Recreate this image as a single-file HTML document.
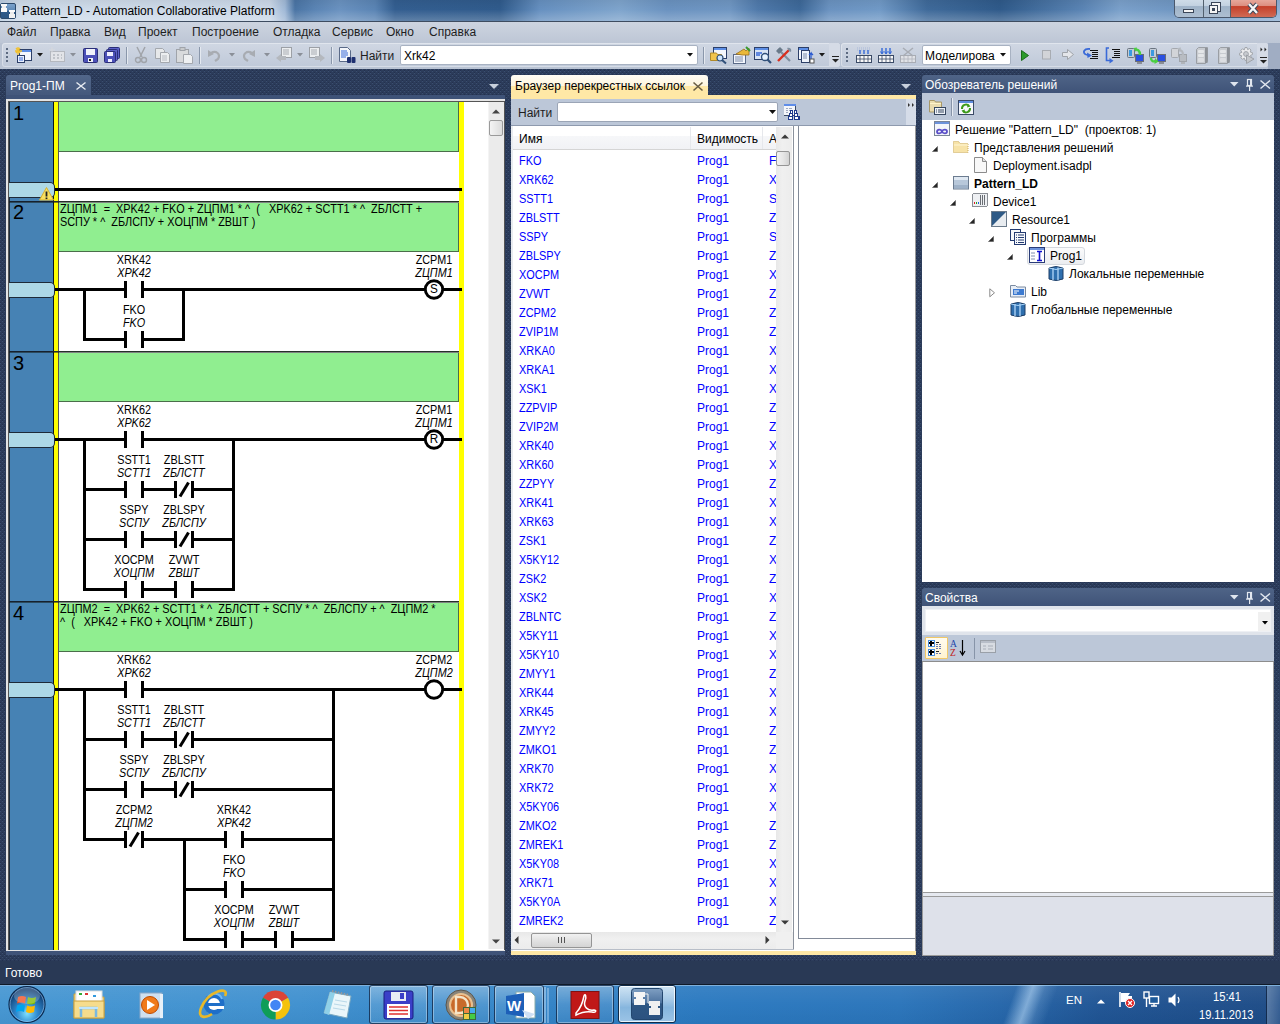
<!DOCTYPE html><html><head><meta charset="utf-8"><title>Pattern_LD</title><style>
*{margin:0;padding:0;box-sizing:border-box}
html,body{width:1280px;height:1024px;overflow:hidden;background:#293955;font-family:"Liberation Sans",sans-serif;font-size:12px;color:#000}
.a{position:absolute}
.t{position:absolute;white-space:nowrap;line-height:14px}
.dots{background-color:#2a3a57;background-image:radial-gradient(circle at 0.5px 0.5px,#3b4e70 0.7px,transparent 0.8px),radial-gradient(circle at 2.5px 2.5px,#3b4e70 0.7px,transparent 0.8px);background-size:4px 4px}
.hdr{background:linear-gradient(#4f6487,#3e5277);color:#fff}
.tb{background:#bcc7d8}
svg{position:absolute;overflow:visible}
</style></head><body>
<div class="a" style="left:0;top:0;width:1280px;height:21px;background:linear-gradient(90deg,#b9cbe0 0px,#cfdcea 20px,#cbd8e8 270px,#9fb8d6 285px,#4a74a4 295px,#5a84b4 315px,#6a92c0 340px,#5a84b4 375px,#335e90 395px,#305b8c 500px,#6690c0 540px,#7ea4cc 620px,#6a92c0 667px,#6f96c2 730px,#4f79aa 758px,#3d6898 800px,#6a92c0 829px,#7099c6 880px,#3f6a9a 927px,#2f5a8a 1000px,#5a84b4 1082px,#7aa0ca 1120px,#6f96c2 1174px,#8fb0d4 1280px)"></div>
<div class="a" style="left:0;top:0;width:1280px;height:21px;background:linear-gradient(rgba(0,0,0,0.06),rgba(255,255,255,0) 45%,rgba(255,255,255,0.22))"></div>
<div class="a" style="left:0;top:3px;width:16px;height:16px;background:linear-gradient(#7aa2cc,#5f8ab8 45%,#2f5b8a 50%,#2c5684);border:1px solid #2c4a6c;border-radius:2px"></div>
<div class="a" style="left:1px;top:4px;width:6px;height:2px;background:#fafafa"></div><div class="a" style="left:2px;top:6px;width:4px;height:2px;background:#f0f0f0"></div><div class="a" style="left:1px;top:8px;width:6px;height:4px;background:#fafafa"></div>
<div class="a" style="left:9px;top:10px;width:6px;height:2px;background:#fafafa"></div><div class="a" style="left:10px;top:12px;width:4px;height:2px;background:#eaeaea"></div><div class="a" style="left:9px;top:14px;width:6px;height:4px;background:#f0f0f0"></div>
<div class="t" style="left:22px;top:4px;font-size:12px;color:#000">Pattern_LD - Automation Collaborative Platform</div>
<div class="a" style="left:1174px;top:-2px;width:103px;height:20px;border:1px solid #4a586c;border-top:none;border-radius:0 0 5px 5px;overflow:hidden"><div class="a" style="left:0;top:0;width:28px;height:19px;background:linear-gradient(#d3dfea,#c3d2e1 40%,#9fb3c8 45%,#aebfd1)"></div><div class="a" style="left:28px;top:0;width:1px;height:19px;background:#52606e"></div><div class="a" style="left:29px;top:0;width:26px;height:19px;background:linear-gradient(#d3dfea,#c3d2e1 40%,#9fb3c8 45%,#aebfd1)"></div><div class="a" style="left:55px;top:0;width:1px;height:19px;background:#52606e"></div><div class="a" style="left:56px;top:0;width:47px;height:19px;background:linear-gradient(#eab0a4,#dd8f80 40%,#c4402a 45%,#d06a55)"></div></div>
<div class="a" style="left:1183px;top:9px;width:11px;height:4px;background:#f4f4f4;border:1px solid #3b4658"></div>
<div class="a" style="left:1211px;top:2px;width:10px;height:10px;background:#f4f4f4;border:1px solid #3b4658"></div>
<div class="a" style="left:1209px;top:5px;width:9px;height:9px;background:#f4f4f4;border:1px solid #3b4658"></div>
<div class="a" style="left:1212px;top:8px;width:3px;height:3px;background:#3b4658"></div>
<svg style="left:1247px;top:3px" width="12" height="11"><path d="M2 1 L10 10 M10 1 L2 10" stroke="#3b4658" stroke-width="4.2"/><path d="M2 1 L10 10 M10 1 L2 10" stroke="#f6f6f6" stroke-width="2.4"/></svg>
<div class="a" style="left:0;top:21px;width:1280px;height:1px;background:#3e4c60"></div>
<div class="a" style="left:0;top:22px;width:1280px;height:21px;background:linear-gradient(#cdd4e0,#bdc6d5)"></div>
<div class="t" style="left:7px;top:25px;color:#1e1e1e">Файл</div>
<div class="t" style="left:50px;top:25px;color:#1e1e1e">Правка</div>
<div class="t" style="left:104px;top:25px;color:#1e1e1e">Вид</div>
<div class="t" style="left:138px;top:25px;color:#1e1e1e">Проект</div>
<div class="t" style="left:192px;top:25px;color:#1e1e1e">Построение</div>
<div class="t" style="left:273px;top:25px;color:#1e1e1e">Отладка</div>
<div class="t" style="left:332px;top:25px;color:#1e1e1e">Сервис</div>
<div class="t" style="left:386px;top:25px;color:#1e1e1e">Окно</div>
<div class="t" style="left:429px;top:25px;color:#1e1e1e">Справка</div>
<div class="a" style="left:0;top:43px;width:1280px;height:26px;background:linear-gradient(#b7c1d1,#bac4d4)"></div>
<div class="a" style="left:2px;top:43px;width:838px;height:24px;border-radius:3px;background:linear-gradient(#d0d7e3,#bfc9d9);box-shadow:inset 0 0 0 1px rgba(255,255,255,0.35)"></div>
<div class="a" style="left:841px;top:43px;width:427px;height:24px;border-radius:3px;background:linear-gradient(#d0d7e3,#bfc9d9);box-shadow:inset 0 0 0 1px rgba(255,255,255,0.35)"></div>
<div class="a" style="left:1268px;top:43px;width:12px;height:26px;background:#a0adc3"></div>
<div class="a" style="left:6px;top:48px;width:2px;height:2px;background:#5c6a80"></div>
<div class="a" style="left:6px;top:52px;width:2px;height:2px;background:#5c6a80"></div>
<div class="a" style="left:6px;top:56px;width:2px;height:2px;background:#5c6a80"></div>
<div class="a" style="left:6px;top:60px;width:2px;height:2px;background:#5c6a80"></div>
<svg style="left:15px;top:47px" width="18" height="17"><rect x="4.5" y="2.5" width="12" height="11" fill="#f4f7fd" stroke="#2c3f68"/><rect x="5" y="3" width="11" height="2" fill="#5c8ee6"/><path d="M3 0v8M0 4h7M1 1l4 5M5 1l-4 5" stroke="#f2c12e" stroke-width="1.3"/><rect x="2.5" y="8.5" width="7" height="7" fill="#e8f0ff" stroke="#2c3f68"/><path d="M4 11h4M4 13h4" stroke="#3a6ad8"/></svg>
<svg style="left:37px;top:53px" width="6" height="4"><path d="M0 0 L6 0 L3 3.5Z" fill="#1a1a1a"/></svg>
<svg style="left:49px;top:47px" width="17" height="17"><rect x="1.5" y="4.5" width="14" height="10" fill="#e2e4e8" stroke="#b4b8bf"/><path d="M4 8h2M8 8h2M12 8h1M4 11h2M8 11h2M12 11h1" stroke="#9da2aa"/><path d="M3 0v6M0 3h6" stroke="#d6d8dc"/></svg>
<svg style="left:70px;top:53px" width="6" height="4"><path d="M0 0 L6 0 L3 3.5Z" fill="#8a8f98"/></svg>
<svg style="left:83px;top:48px" width="15" height="15"><rect x="0.5" y="0.5" width="14" height="14" rx="1" fill="#4b50b8" stroke="#2a2e78"/><rect x="3" y="1" width="9" height="6" fill="#f0f2fa"/><rect x="5" y="10" width="5" height="4" fill="#f0f2fa"/><rect x="6" y="11" width="2" height="2" fill="#222"/></svg>
<svg style="left:104px;top:47px" width="16" height="16"><rect x="4.5" y="0.5" width="11" height="11" rx="1" fill="#5b60c8" stroke="#2a2e78"/><rect x="2.5" y="2.5" width="11" height="11" rx="1" fill="#5b60c8" stroke="#2a2e78"/><rect x="0.5" y="4.5" width="11" height="11" rx="1" fill="#4b50b8" stroke="#2a2e78"/><rect x="3" y="5" width="6" height="4" fill="#eef"/><rect x="4" y="12" width="4" height="3" fill="#eef"/></svg>
<div class="a" style="left:126px;top:47px;width:1px;height:17px;background:#8a97ab"></div><div class="a" style="left:127px;top:47px;width:1px;height:17px;background:#e4e9f0"></div>
<svg style="left:135px;top:47px" width="12" height="17"><path d="M2 0 L7 10 M10 0 L5 10" stroke="#a0a4aa" stroke-width="1.5"/><circle cx="3" cy="13" r="2.5" fill="none" stroke="#a0a4aa" stroke-width="1.4"/><circle cx="9" cy="13" r="2.5" fill="none" stroke="#a0a4aa" stroke-width="1.4"/></svg>
<svg style="left:155px;top:48px" width="16" height="15"><path d="M0.5 0.5h7l2 2v8h-9z" fill="#e6e8ea" stroke="#a4a8ae"/><path d="M5.5 4.5h7l2 2v8h-9z" fill="#eceef0" stroke="#a4a8ae"/><path d="M7 8h5M7 10h5M7 12h5" stroke="#b8bcc2"/></svg>
<svg style="left:176px;top:47px" width="18" height="17"><rect x="0.5" y="2.5" width="12" height="13" fill="#d8dadc" stroke="#a0a4aa"/><rect x="4" y="0.5" width="5" height="3" fill="#c8cacc" stroke="#a0a4aa"/><path d="M7.5 7.5h7l2 2v7h-9z" fill="#eef0f2" stroke="#a4a8ae"/></svg>
<div class="a" style="left:199px;top:47px;width:1px;height:17px;background:#8a97ab"></div><div class="a" style="left:200px;top:47px;width:1px;height:17px;background:#e4e9f0"></div>
<svg style="left:207px;top:49px" width="14" height="13"><path d="M4 4 C9 1 14 5 11 10 L8 12" fill="none" stroke="#a8acb2" stroke-width="2.2"/><path d="M1 1 L1 8 L7 5Z" fill="#a8acb2"/></svg>
<svg style="left:229px;top:53px" width="6" height="4"><path d="M0 0 L6 0 L3 3.5Z" fill="#8a8f98"/></svg>
<svg style="left:242px;top:49px" width="14" height="13"><path d="M10 4 C5 1 0 5 3 10 L6 12" fill="none" stroke="#a8acb2" stroke-width="2.2"/><path d="M13 1 L13 8 L7 5Z" fill="#a8acb2"/></svg>
<svg style="left:264px;top:53px" width="6" height="4"><path d="M0 0 L6 0 L3 3.5Z" fill="#8a8f98"/></svg>
<svg style="left:276px;top:47px" width="17" height="17"><rect x="5.5" y="0.5" width="10" height="10" fill="#eceef0" stroke="#9ca0a6"/><path d="M7 3h6M7 5h6M7 7h6" stroke="#a8acb2"/><path d="M0 11 L5 7 L5 9 L10 9 L10 13 L5 13 L5 15Z" fill="#b4b8be"/></svg>
<svg style="left:297px;top:53px" width="6" height="4"><path d="M0 0 L6 0 L3 3.5Z" fill="#8a8f98"/></svg>
<svg style="left:309px;top:47px" width="17" height="17"><rect x="0.5" y="0.5" width="10" height="10" fill="#eceef0" stroke="#9ca0a6"/><path d="M2 3h6M2 5h6M2 7h6" stroke="#a8acb2"/><path d="M16 11 L11 7 L11 9 L6 9 L6 13 L11 13 L11 15Z" fill="#b4b8be"/></svg>
<div class="a" style="left:331px;top:47px;width:1px;height:17px;background:#8a97ab"></div><div class="a" style="left:332px;top:47px;width:1px;height:17px;background:#e4e9f0"></div>
<svg style="left:339px;top:47px" width="17" height="17"><path d="M0.5 0.5h8l3 3v11h-11z" fill="#f4f6fa" stroke="#5a6a88"/><path d="M2 4h6M2 6h7M2 8h7M2 10h5" stroke="#3a6ad8"/><rect x="8" y="10" width="4" height="6" rx="1" fill="#1e3070"/><rect x="12.5" y="10" width="4" height="6" rx="1" fill="#1e3070"/></svg>
<div class="t" style="left:360px;top:49px;color:#1e1e1e;font-size:12px;">Найти</div>
<div class="a" style="left:400px;top:45px;width:298px;height:20px;background:#fff;border:1px solid #a8b2c2;border-radius:2px"></div>
<div class="t" style="left:404px;top:49px;color:#000;font-size:12px;">Xrk42</div>
<svg style="left:687px;top:53px" width="6" height="4"><path d="M0 0 L6 0 L3 3.5Z" fill="#111"/></svg>
<div class="a" style="left:703px;top:47px;width:1px;height:17px;background:#8a97ab"></div><div class="a" style="left:704px;top:47px;width:1px;height:17px;background:#e4e9f0"></div>
<svg style="left:710px;top:47px" width="17" height="17"><rect x="3.5" y="0.5" width="13" height="11" fill="#f4f7fd" stroke="#2c3f68"/><rect x="4" y="1" width="12" height="2" fill="#5c8ee6"/><path d="M0.5 6h6l1 1.5h4v6h-11z" fill="#f1c44c" stroke="#b08a2a"/><circle cx="10" cy="11" r="3" fill="#cfe6ff" stroke="#30507a" stroke-width="1.2"/><path d="M12 13 L16 16.5" stroke="#30507a" stroke-width="2"/></svg>
<svg style="left:732px;top:47px" width="18" height="17"><rect x="1.5" y="7.5" width="12" height="9" fill="#f4f7fd" stroke="#5a6a88"/><path d="M3 10h8M3 12h8M3 14h8" stroke="#7a8aa8"/><path d="M4 7 L12 2 L14 4 L17 1 L17 8 L10 8Z" fill="#e9b838" stroke="#9a7020" stroke-width="0.8"/><path d="M14 0 L18 4" stroke="#3a9a30" stroke-width="2"/></svg>
<svg style="left:754px;top:47px" width="18" height="17"><rect x="0.5" y="0.5" width="14" height="12" fill="#d8e4f4" stroke="#2c3f68"/><rect x="1" y="1" width="13" height="2" fill="#5c8ee6"/><path d="M2 6h6M2 8h4" stroke="#3a6ad8" stroke-width="1.3"/><circle cx="11" cy="10" r="3.5" fill="#e6f2ff" stroke="#30507a" stroke-width="1.3"/><path d="M13.5 12.5 L17 16" stroke="#30507a" stroke-width="2.2"/></svg>
<svg style="left:776px;top:47px" width="17" height="17"><path d="M2 2 L14 14" stroke="#8090a0" stroke-width="2.2"/><path d="M14 2 L2 14" stroke="#d83020" stroke-width="2.4"/><path d="M0 4 L4 0 L7 3 L3 7Z" fill="#6a7a8a"/><path d="M11 1 C14 0 16 2 15 5 L13 4Z" fill="#8090a0"/></svg>
<svg style="left:798px;top:47px" width="17" height="17"><rect x="0.5" y="0.5" width="10" height="12" fill="#f4f7fd" stroke="#2c3f68"/><rect x="1" y="1" width="9" height="2" fill="#5c8ee6"/><rect x="3.5" y="3.5" width="8" height="12" fill="#eef3fb" stroke="#2c3f68"/><path d="M5 7h4M5 9h4M5 11h4" stroke="#7a8aa8"/><path d="M13 14 L13 6 L11 8 M13 6 L15 8" stroke="#2a5ad0" stroke-width="1.3" fill="none"/><rect x="12" y="12" width="4" height="4" fill="#fff" stroke="#555"/></svg>
<svg style="left:819px;top:53px" width="6" height="4"><path d="M0 0 L6 0 L3 3.5Z" fill="#1a1a1a"/></svg>
<div class="a" style="left:829px;top:43px;width:11px;height:24px;border-radius:0 3px 3px 0;background:#d5dbe6"></div>
<svg style="left:832px;top:56px" width="7" height="7"><path d="M0 0.5h7" stroke="#222"/><path d="M0 3 L7 3 L3.5 6.5Z" fill="#222"/></svg>
<div class="a" style="left:846px;top:48px;width:2px;height:2px;background:#5c6a80"></div>
<div class="a" style="left:846px;top:52px;width:2px;height:2px;background:#5c6a80"></div>
<div class="a" style="left:846px;top:56px;width:2px;height:2px;background:#5c6a80"></div>
<div class="a" style="left:846px;top:60px;width:2px;height:2px;background:#5c6a80"></div>
<svg style="left:855px;top:47px" width="18" height="17"><rect x="1.5" y="8.5" width="15" height="7" fill="#f8f8f8" stroke="#3a4a66"/><path d="M5 9v6M9 9v6M13 9v6M2 12h14" stroke="#3a4a66" stroke-width="0.8"/><path d="M2 1h14M2 3h14" stroke="#a8b8d8" stroke-dasharray="1 1"/><path d="M5 3v4M9 3v4M13 3v4" stroke="#2a62d8" stroke-width="1.3"/></svg>
<svg style="left:877px;top:47px" width="18" height="17"><rect x="1.5" y="8.5" width="15" height="7" fill="#f8f8f8" stroke="#3a4a66"/><path d="M5 9v6M9 9v6M13 9v6M2 12h14" stroke="#3a4a66" stroke-width="0.8"/><path d="M5 1v5M9 1v5M13 1v5" stroke="#2a62d8" stroke-width="1.3"/><path d="M3.5 4.5 L5 7 L6.5 4.5 M7.5 4.5 L9 7 L10.5 4.5 M11.5 4.5 L13 7 L14.5 4.5" stroke="#2a62d8" fill="none"/></svg>
<svg style="left:899px;top:47px" width="18" height="17"><rect x="1.5" y="8.5" width="15" height="7" fill="#e0e2e6" stroke="#a8acb4"/><path d="M5 9v6M9 9v6M13 9v6M2 12h14" stroke="#b0b4bc" stroke-width="0.8"/><path d="M4 1 L14 9 M14 1 L4 9" stroke="#a8acb4" stroke-width="1.5"/></svg>
<div class="a" style="left:922px;top:45px;width:89px;height:20px;background:#fff;border:1px solid #a8b2c2;border-radius:2px"></div>
<div class="t" style="left:925px;top:49px;color:#000;font-size:12px;">Моделирова</div>
<svg style="left:1000px;top:53px" width="6" height="4"><path d="M0 0 L6 0 L3 3.5Z" fill="#111"/></svg>
<svg style="left:1021px;top:50px" width="8" height="11"><path d="M0.5 0.5 L7.5 5.5 L0.5 10.5Z" fill="#2a9a2a" stroke="#1a6a1a"/></svg>
<svg style="left:1042px;top:50px" width="9" height="10"><rect x="0.5" y="0.5" width="8" height="8.5" fill="#d2d4d8" stroke="#a8acb2"/></svg>
<svg style="left:1062px;top:49px" width="12" height="11"><path d="M0.5 3.5h5v-3l6 5l-6 5v-3h-5z" fill="#e4e6ea" stroke="#a0a4aa"/></svg>
<svg style="left:1082px;top:47px" width="17" height="17"><path d="M8 2 C2 1 0 6 4 7.5 L7 8.5" fill="none" stroke="#3a6ad8" stroke-width="1.8"/><path d="M5 5.5 L10 8.5 L5.5 11Z" fill="#3a6ad8"/><path d="M8 3.5h8M10 5.5h6M10 7.5h6M10 9.5h6M8 11.5h8" stroke="#111" stroke-width="1.1" shape-rendering="crispEdges"/></svg>
<svg style="left:1104px;top:47px" width="17" height="17"><path d="M5 1 H2.5 V13.5 H6" fill="none" stroke="#3a6ad8" stroke-width="1.6"/><path d="M5.5 11 L9.5 13.8 L5.5 16.5Z" fill="#3a6ad8"/><path d="M8 2.5h8M10 4.5h6M10 6.5h6M10 8.5h6M8 10.5h8" stroke="#111" stroke-width="1.1" shape-rendering="crispEdges"/></svg>
<svg style="left:1127px;top:47px" width="18" height="18"><rect x="0.5" y="1.5" width="7" height="9" rx="1" fill="#c4ccd6" stroke="#6a7480"/><rect x="2" y="3" width="3" height="6" fill="#3a9ae0"/><rect x="8.5" y="7.5" width="8" height="7" fill="#2a50e0" stroke="#6a6e78"/><rect x="10" y="15" width="5" height="2" fill="#8a8e96"/><path d="M13 8 C13 3 10 2 8 3" fill="none" stroke="#4ad040" stroke-width="2.4"/><path d="M6.5 1 L10 0.5 L9 5Z" fill="#4ad040"/></svg>
<svg style="left:1149px;top:47px" width="18" height="18"><rect x="0.5" y="1.5" width="7" height="9" rx="1" fill="#c4ccd6" stroke="#6a7480"/><rect x="2" y="3" width="3" height="6" fill="#3a9ae0"/><rect x="8.5" y="7.5" width="8" height="7" fill="#2a50e0" stroke="#6a6e78"/><rect x="10" y="15" width="5" height="2" fill="#8a8e96"/><path d="M2 11 C2 14 4 15 7 14" fill="none" stroke="#4ad040" stroke-width="2.4"/><path d="M6 11 L9.5 14.5 L5.5 17Z" fill="#4ad040"/></svg>
<svg style="left:1171px;top:47px" width="18" height="18"><rect x="0.5" y="1.5" width="7" height="9" rx="1" fill="#d2d4d8" stroke="#a4a8ae"/><rect x="8.5" y="7.5" width="7" height="7" fill="#b8bcc2" stroke="#a0a4aa"/><rect x="10" y="15" width="4" height="2" fill="#b0b4ba"/><path d="M12 8 C12 4 10 3 8 3.5" fill="none" stroke="#b4b8be" stroke-width="2.2"/><path d="M7 1 L10 0.5 L9 5Z" fill="#b4b8be"/></svg>
<svg style="left:1196px;top:47px" width="12" height="17"><path d="M0.5 2.5 L2.5 0.5 H11.5 V14.5 L9.5 16.5 H0.5Z" fill="#c8cbd0" stroke="#9a9ea4"/><rect x="9" y="1" width="2.5" height="15" fill="#8e9298"/><rect x="2" y="3" width="6" height="3" rx="1" fill="#e4e6e8"/><rect x="2" y="7" width="6" height="3" rx="1" fill="#e4e6e8"/><rect x="2" y="11" width="6" height="4" rx="1" fill="#dcdee2"/></svg>
<svg style="left:1218px;top:47px" width="12" height="17"><path d="M0.5 2.5 L2.5 0.5 H11.5 V14.5 L9.5 16.5 H0.5Z" fill="#c8cbd0" stroke="#9a9ea4"/><rect x="9" y="1" width="2.5" height="15" fill="#8e9298"/><rect x="2" y="3" width="6" height="3" rx="1" fill="#e4e6e8"/><rect x="2" y="7" width="6" height="3" rx="1" fill="#e4e6e8"/><rect x="2" y="11" width="6" height="4" rx="1" fill="#dcdee2"/></svg>
<svg style="left:1238px;top:47px" width="17" height="17"><path d="M7 0.5 L9 0.5 L9.6 2.6 L11.6 1.6 L13 3 L12.2 5 L14.4 5.6 L14.4 7.6 L12.4 8.4 L13.4 10.4 L11.8 12 L9.8 11 L9 13.4 L7 13.4 L6.4 11.2 L4.4 12.2 L2.8 10.8 L3.8 8.8 L1.6 8.2 L1.6 6.2 L3.8 5.4 L2.8 3.4 L4.4 1.8 L6.4 2.8Z" fill="#eaebed" stroke="#a2a6ac"/><circle cx="8" cy="7" r="2.4" fill="#c8cbd0" stroke="#a2a6ac"/><path d="M8.5 8 L16 12 L8.5 16.5Z" fill="#c4c7cc" stroke="#9ea2a8"/></svg>
<div class="a" style="left:1257px;top:43px;width:11px;height:24px;border-radius:0 3px 3px 0;background:#d5dbe6"></div>
<svg style="left:1260px;top:47px" width="8" height="6"><path d="M0.5 0.5 L2.5 2.5 L0.5 4.5Z M4.5 0.5 L6.5 2.5 L4.5 4.5Z" fill="#222"/></svg>
<svg style="left:1260px;top:57px" width="7" height="7"><path d="M0 0.5h7" stroke="#222"/><path d="M0 3 L7 3 L3.5 6.5Z" fill="#222"/></svg>
<div class="a" style="left:0;top:69px;width:1280px;height:892px;background:#2c3c5a"></div><svg style="left:0;top:69px" width="1280" height="892" shape-rendering="crispEdges"><defs><pattern id="dp" width="4" height="4" patternUnits="userSpaceOnUse"><rect x="0" y="2" width="1" height="1" fill="#3b4e70"/><rect x="2" y="0" width="1" height="1" fill="#3b4e70"/><rect x="0" y="1" width="1" height="1" fill="#243150"/><rect x="2" y="3" width="1" height="1" fill="#243150"/></pattern></defs><rect width="1280" height="892" fill="url(#dp)"/></svg>
<div class="a" style="left:0;top:961px;width:1280px;height:24px;background:#293955"></div>
<div class="t" style="left:5px;top:966px;color:#fff">Готово</div>
<div class="a" style="left:6px;top:75px;width:85px;height:20px;border-radius:3px 3px 0 0;background:linear-gradient(#52678a,#44587c)"></div>
<div class="t" style="left:10px;top:79px;color:#fff;font-size:12px;">Prog1-ПМ</div>
<svg style="left:76px;top:82px" width="10" height="8"><path d="M0.5 0.5 L9.5 7.5 M9.5 0.5 L0.5 7.5" stroke="#e8ecf2" stroke-width="1.4"/></svg>
<svg style="left:489px;top:84px" width="10" height="6"><path d="M0 0 L10 0 L5 5 Z" fill="#c8d0dc"/></svg>
<div class="a" style="left:6px;top:95px;width:499px;height:4px;background:#3f5378"></div>
<div class="a" style="left:6px;top:99px;width:499px;height:852px;background:#e4e4e4"></div>
<div class="a" style="left:6px;top:951px;width:499px;height:4px;background:#3f5378"></div>
<div class="a" style="left:8px;top:101px;width:497px;height:849px;background:#555"></div>
<div class="a" style="left:9px;top:102px;width:495px;height:848px;background:#fff;overflow:hidden">
<div class="a" style="left:0;top:0;width:45px;height:848px;background:#4682b4"></div>
<div class="a" style="left:0;top:0;width:1px;height:848px;background:#1c2c3c"></div>
<div class="a" style="left:44px;top:0;width:1px;height:848px;background:#0c1420"></div>
<div class="a" style="left:45px;top:0;width:4px;height:848px;background:#ffff00"></div>
<div class="a" style="left:49px;top:0;width:1px;height:848px;background:#555"></div>
<div class="a" style="left:450px;top:0;width:5px;height:848px;background:#ffff00"></div>
<div class="a" style="left:50px;top:0px;width:400px;height:50px;background:#90ee90;border-right:1px solid #4a6e4a;border-bottom:1px solid #4a6e4a"></div>
<div class="a" style="left:50px;top:101px;width:400px;height:49px;background:#90ee90;border-right:1px solid #4a6e4a;border-bottom:1px solid #4a6e4a"></div>
<div class="a" style="left:50px;top:251px;width:400px;height:49px;background:#90ee90;border-right:1px solid #4a6e4a;border-bottom:1px solid #4a6e4a"></div>
<div class="a" style="left:50px;top:501px;width:400px;height:49px;background:#90ee90;border-right:1px solid #4a6e4a;border-bottom:1px solid #4a6e4a"></div>
<div class="a" style="left:0;top:99px;width:450px;height:1px;background:#26302a"></div>
<div class="a" style="left:0;top:100px;width:450px;height:1px;background:rgba(20,30,25,0.55)"></div>
<div class="a" style="left:0;top:99px;width:45px;height:1px;background:#16202c"></div>
<div class="a" style="left:0;top:249px;width:450px;height:1px;background:#26302a"></div>
<div class="a" style="left:0;top:250px;width:450px;height:1px;background:rgba(20,30,25,0.55)"></div>
<div class="a" style="left:0;top:249px;width:45px;height:1px;background:#16202c"></div>
<div class="a" style="left:0;top:499px;width:450px;height:1px;background:#26302a"></div>
<div class="a" style="left:0;top:500px;width:450px;height:1px;background:rgba(20,30,25,0.55)"></div>
<div class="a" style="left:0;top:499px;width:45px;height:1px;background:#16202c"></div>
<div class="t" style="left:4px;top:0px;font-size:20px;line-height:22px;color:#000">1</div>
<div class="t" style="left:4px;top:99px;font-size:20px;line-height:22px;color:#000">2</div>
<div class="t" style="left:4px;top:250px;font-size:20px;line-height:22px;color:#000">3</div>
<div class="t" style="left:4px;top:500px;font-size:20px;line-height:22px;color:#000">4</div>
<div class="a" style="left:0;top:80px;width:46px;height:16px;background:#add8e6;border-radius:0 5px 5px 0;border-top:1px solid #1e2a38;border-right:1px solid #1e2a38;border-bottom:1px solid #1e2a38"></div>
<div class="a" style="left:0;top:180px;width:46px;height:16px;background:#add8e6;border-radius:0 5px 5px 0;border-top:1px solid #1e2a38;border-right:1px solid #1e2a38;border-bottom:1px solid #1e2a38"></div>
<div class="a" style="left:0;top:330px;width:46px;height:16px;background:#add8e6;border-radius:0 5px 5px 0;border-top:1px solid #1e2a38;border-right:1px solid #1e2a38;border-bottom:1px solid #1e2a38"></div>
<div class="a" style="left:0;top:580px;width:46px;height:16px;background:#add8e6;border-radius:0 5px 5px 0;border-top:1px solid #1e2a38;border-right:1px solid #1e2a38;border-bottom:1px solid #1e2a38"></div>
<svg style="left:30px;top:85px" width="15" height="14"><path d="M7.5 0.5 L14.5 13 L0.5 13 Z" fill="#f8e060" stroke="#d8b030" stroke-width="1"/><rect x="6.6" y="4.5" width="1.8" height="5" fill="#222"/><rect x="6.6" y="10.5" width="1.8" height="1.6" fill="#222"/></svg>
<svg style="left:-9px;top:-102px" width="1280" height="1024" font-family="Liberation Sans, sans-serif" font-size="12.3" style="white-space:pre"><text transform="translate(60,213) scale(0.885,1)">ZЦПМ1  =  XPK42 + FKO + ZЦПМ1 * ^  (   XPK62 + SCTT1 * ^  ZБЛСТТ +</text><text transform="translate(60,226) scale(0.885,1)">SCПУ * ^  ZБЛСПУ + XOЦПМ * ZBШТ )</text><text transform="translate(60,613) scale(0.885,1)">ZЦПМ2  =  XPK62 + SCTT1 * ^  ZБЛСТТ + SCПУ * ^  ZБЛСПУ + ^  ZЦПМ2 *</text><text transform="translate(60,626) scale(0.885,1)">^  (   XPK42 + FKO + XOЦПМ * ZBШТ )</text></svg>
<svg style="left:-9px;top:-102px" width="1280" height="1024" font-family="Liberation Sans, sans-serif"><rect x="55" y="188.0" width="407" height="3" fill="#000"/>
<rect x="55" y="288.0" width="69" height="3" fill="#000"/>
<rect x="124" y="281.0" width="3" height="17" fill="#000"/>
<rect x="141" y="281.0" width="3" height="17" fill="#000"/>
<rect x="144" y="288.0" width="281" height="3" fill="#000"/>
<circle cx="434" cy="289.5" r="8.7" fill="#fff" stroke="#000" stroke-width="2.9"/>
<text transform="translate(434,293.4) scale(0.92,1)" text-anchor="middle" font-size="12.8">S</text>
<text transform="translate(434,264.0) scale(0.88,1)" text-anchor="middle" font-size="12.3">ZCPM1</text>
<text transform="translate(434,277.0) scale(0.88,1)" text-anchor="middle" font-size="12.3" font-style="italic">ZЦПМ1</text>
<rect x="443" y="288.0" width="19" height="3" fill="#000"/>
<text transform="translate(134,264.0) scale(0.88,1)" text-anchor="middle" font-size="12.3">XRK42</text>
<text transform="translate(134,277.0) scale(0.88,1)" text-anchor="middle" font-size="12.3" font-style="italic">XPK42</text>
<rect x="83" y="288.0" width="3" height="53.0" fill="#000"/>
<rect x="182" y="288.0" width="3" height="53.0" fill="#000"/>
<rect x="83" y="338.0" width="41" height="3" fill="#000"/>
<rect x="124" y="331.0" width="3" height="17" fill="#000"/>
<rect x="141" y="331.0" width="3" height="17" fill="#000"/>
<rect x="144" y="338.0" width="41" height="3" fill="#000"/>
<text transform="translate(134,314.0) scale(0.88,1)" text-anchor="middle" font-size="12.3">FKO</text>
<text transform="translate(134,327.0) scale(0.88,1)" text-anchor="middle" font-size="12.3" font-style="italic">FKO</text>
<rect x="55" y="438.0" width="69" height="3" fill="#000"/>
<rect x="124" y="431.0" width="3" height="17" fill="#000"/>
<rect x="141" y="431.0" width="3" height="17" fill="#000"/>
<rect x="144" y="438.0" width="281" height="3" fill="#000"/>
<circle cx="434" cy="439.5" r="8.7" fill="#fff" stroke="#000" stroke-width="2.9"/>
<text transform="translate(434,443.4) scale(0.92,1)" text-anchor="middle" font-size="12.8">R</text>
<text transform="translate(434,414.0) scale(0.88,1)" text-anchor="middle" font-size="12.3">ZCPM1</text>
<text transform="translate(434,427.0) scale(0.88,1)" text-anchor="middle" font-size="12.3" font-style="italic">ZЦПМ1</text>
<rect x="443" y="438.0" width="19" height="3" fill="#000"/>
<text transform="translate(134,414.0) scale(0.88,1)" text-anchor="middle" font-size="12.3">XRK62</text>
<text transform="translate(134,427.0) scale(0.88,1)" text-anchor="middle" font-size="12.3" font-style="italic">XPK62</text>
<rect x="83" y="438.0" width="3" height="153.0" fill="#000"/>
<rect x="232" y="438.0" width="3" height="153.0" fill="#000"/>
<rect x="83" y="488.0" width="41" height="3" fill="#000"/>
<rect x="124" y="481.0" width="3" height="17" fill="#000"/>
<rect x="141" y="481.0" width="3" height="17" fill="#000"/>
<rect x="144" y="488.0" width="30" height="3" fill="#000"/>
<rect x="174" y="481.0" width="3" height="17" fill="#000"/>
<rect x="191" y="481.0" width="3" height="17" fill="#000"/>
<line x1="180" y1="496.5" x2="188.5" y2="482.5" stroke="#000" stroke-width="3"/>
<rect x="194" y="488.0" width="41" height="3" fill="#000"/>
<text transform="translate(134,464.0) scale(0.88,1)" text-anchor="middle" font-size="12.3">SSTT1</text>
<text transform="translate(134,477.0) scale(0.88,1)" text-anchor="middle" font-size="12.3" font-style="italic">SCTT1</text>
<text transform="translate(184,464.0) scale(0.88,1)" text-anchor="middle" font-size="12.3">ZBLSTT</text>
<text transform="translate(184,477.0) scale(0.88,1)" text-anchor="middle" font-size="12.3" font-style="italic">ZБЛСТТ</text>
<rect x="83" y="538.0" width="41" height="3" fill="#000"/>
<rect x="124" y="531.0" width="3" height="17" fill="#000"/>
<rect x="141" y="531.0" width="3" height="17" fill="#000"/>
<rect x="144" y="538.0" width="30" height="3" fill="#000"/>
<rect x="174" y="531.0" width="3" height="17" fill="#000"/>
<rect x="191" y="531.0" width="3" height="17" fill="#000"/>
<line x1="180" y1="546.5" x2="188.5" y2="532.5" stroke="#000" stroke-width="3"/>
<rect x="194" y="538.0" width="41" height="3" fill="#000"/>
<text transform="translate(134,514.0) scale(0.88,1)" text-anchor="middle" font-size="12.3">SSPY</text>
<text transform="translate(134,527.0) scale(0.88,1)" text-anchor="middle" font-size="12.3" font-style="italic">SCПУ</text>
<text transform="translate(184,514.0) scale(0.88,1)" text-anchor="middle" font-size="12.3">ZBLSPY</text>
<text transform="translate(184,527.0) scale(0.88,1)" text-anchor="middle" font-size="12.3" font-style="italic">ZБЛСПУ</text>
<rect x="83" y="588.0" width="41" height="3" fill="#000"/>
<rect x="124" y="581.0" width="3" height="17" fill="#000"/>
<rect x="141" y="581.0" width="3" height="17" fill="#000"/>
<rect x="144" y="588.0" width="30" height="3" fill="#000"/>
<rect x="174" y="581.0" width="3" height="17" fill="#000"/>
<rect x="191" y="581.0" width="3" height="17" fill="#000"/>
<rect x="194" y="588.0" width="41" height="3" fill="#000"/>
<text transform="translate(134,564.0) scale(0.88,1)" text-anchor="middle" font-size="12.3">XOCPM</text>
<text transform="translate(134,577.0) scale(0.88,1)" text-anchor="middle" font-size="12.3" font-style="italic">XOЦПМ</text>
<text transform="translate(184,564.0) scale(0.88,1)" text-anchor="middle" font-size="12.3">ZVWT</text>
<text transform="translate(184,577.0) scale(0.88,1)" text-anchor="middle" font-size="12.3" font-style="italic">ZBШТ</text>
<rect x="55" y="688.0" width="69" height="3" fill="#000"/>
<rect x="124" y="681.0" width="3" height="17" fill="#000"/>
<rect x="141" y="681.0" width="3" height="17" fill="#000"/>
<rect x="144" y="688.0" width="281" height="3" fill="#000"/>
<circle cx="434" cy="689.5" r="8.7" fill="#fff" stroke="#000" stroke-width="2.9"/>
<text transform="translate(434,664.0) scale(0.88,1)" text-anchor="middle" font-size="12.3">ZCPM2</text>
<text transform="translate(434,677.0) scale(0.88,1)" text-anchor="middle" font-size="12.3" font-style="italic">ZЦПМ2</text>
<rect x="443" y="688.0" width="19" height="3" fill="#000"/>
<text transform="translate(134,664.0) scale(0.88,1)" text-anchor="middle" font-size="12.3">XRK62</text>
<text transform="translate(134,677.0) scale(0.88,1)" text-anchor="middle" font-size="12.3" font-style="italic">XPK62</text>
<rect x="83" y="688.0" width="3" height="153.0" fill="#000"/>
<rect x="332" y="688.0" width="3" height="253.0" fill="#000"/>
<rect x="83" y="738.0" width="41" height="3" fill="#000"/>
<rect x="124" y="731.0" width="3" height="17" fill="#000"/>
<rect x="141" y="731.0" width="3" height="17" fill="#000"/>
<rect x="144" y="738.0" width="30" height="3" fill="#000"/>
<rect x="174" y="731.0" width="3" height="17" fill="#000"/>
<rect x="191" y="731.0" width="3" height="17" fill="#000"/>
<line x1="180" y1="746.5" x2="188.5" y2="732.5" stroke="#000" stroke-width="3"/>
<rect x="194" y="738.0" width="141" height="3" fill="#000"/>
<text transform="translate(134,714.0) scale(0.88,1)" text-anchor="middle" font-size="12.3">SSTT1</text>
<text transform="translate(134,727.0) scale(0.88,1)" text-anchor="middle" font-size="12.3" font-style="italic">SCTT1</text>
<text transform="translate(184,714.0) scale(0.88,1)" text-anchor="middle" font-size="12.3">ZBLSTT</text>
<text transform="translate(184,727.0) scale(0.88,1)" text-anchor="middle" font-size="12.3" font-style="italic">ZБЛСТТ</text>
<rect x="83" y="788.0" width="41" height="3" fill="#000"/>
<rect x="124" y="781.0" width="3" height="17" fill="#000"/>
<rect x="141" y="781.0" width="3" height="17" fill="#000"/>
<rect x="144" y="788.0" width="30" height="3" fill="#000"/>
<rect x="174" y="781.0" width="3" height="17" fill="#000"/>
<rect x="191" y="781.0" width="3" height="17" fill="#000"/>
<line x1="180" y1="796.5" x2="188.5" y2="782.5" stroke="#000" stroke-width="3"/>
<rect x="194" y="788.0" width="141" height="3" fill="#000"/>
<text transform="translate(134,764.0) scale(0.88,1)" text-anchor="middle" font-size="12.3">SSPY</text>
<text transform="translate(134,777.0) scale(0.88,1)" text-anchor="middle" font-size="12.3" font-style="italic">SCПУ</text>
<text transform="translate(184,764.0) scale(0.88,1)" text-anchor="middle" font-size="12.3">ZBLSPY</text>
<text transform="translate(184,777.0) scale(0.88,1)" text-anchor="middle" font-size="12.3" font-style="italic">ZБЛСПУ</text>
<rect x="83" y="838.0" width="41" height="3" fill="#000"/>
<rect x="124" y="831.0" width="3" height="17" fill="#000"/>
<rect x="141" y="831.0" width="3" height="17" fill="#000"/>
<line x1="130" y1="846.5" x2="138.5" y2="832.5" stroke="#000" stroke-width="3"/>
<rect x="144" y="838.0" width="80" height="3" fill="#000"/>
<rect x="224" y="831.0" width="3" height="17" fill="#000"/>
<rect x="241" y="831.0" width="3" height="17" fill="#000"/>
<rect x="244" y="838.0" width="91" height="3" fill="#000"/>
<text transform="translate(134,814.0) scale(0.88,1)" text-anchor="middle" font-size="12.3">ZCPM2</text>
<text transform="translate(134,827.0) scale(0.88,1)" text-anchor="middle" font-size="12.3" font-style="italic">ZЦПМ2</text>
<text transform="translate(234,814.0) scale(0.88,1)" text-anchor="middle" font-size="12.3">XRK42</text>
<text transform="translate(234,827.0) scale(0.88,1)" text-anchor="middle" font-size="12.3" font-style="italic">XPK42</text>
<rect x="183" y="838.0" width="3" height="103.0" fill="#000"/>
<rect x="183" y="888.0" width="41" height="3" fill="#000"/>
<rect x="224" y="881.0" width="3" height="17" fill="#000"/>
<rect x="241" y="881.0" width="3" height="17" fill="#000"/>
<rect x="244" y="888.0" width="91" height="3" fill="#000"/>
<text transform="translate(234,864.0) scale(0.88,1)" text-anchor="middle" font-size="12.3">FKO</text>
<text transform="translate(234,877.0) scale(0.88,1)" text-anchor="middle" font-size="12.3" font-style="italic">FKO</text>
<rect x="183" y="938.0" width="41" height="3" fill="#000"/>
<rect x="224" y="931.0" width="3" height="17" fill="#000"/>
<rect x="241" y="931.0" width="3" height="17" fill="#000"/>
<rect x="244" y="938.0" width="30" height="3" fill="#000"/>
<rect x="274" y="931.0" width="3" height="17" fill="#000"/>
<rect x="291" y="931.0" width="3" height="17" fill="#000"/>
<rect x="294" y="938.0" width="41" height="3" fill="#000"/>
<text transform="translate(234,914.0) scale(0.88,1)" text-anchor="middle" font-size="12.3">XOCPM</text>
<text transform="translate(234,927.0) scale(0.88,1)" text-anchor="middle" font-size="12.3" font-style="italic">XOЦПМ</text>
<text transform="translate(284,914.0) scale(0.88,1)" text-anchor="middle" font-size="12.3">ZVWT</text>
<text transform="translate(284,927.0) scale(0.88,1)" text-anchor="middle" font-size="12.3" font-style="italic">ZBШТ</text></svg>
<div class="a" style="left:479px;top:0;width:16px;height:847px;background:#ebebeb;border-left:1px solid #f4f4f4"></div>
<svg style="left:483px;top:7px" width="8" height="5"><path d="M0 4.5 L4 0.5 L8 4.5 Z" fill="#444"/></svg>
<div class="a" style="left:480px;top:18px;width:14px;height:16px;border:1px solid #9a9a9a;border-radius:2px;background:linear-gradient(90deg,#f4f4f4,#dcdcdc)"></div>
<svg style="left:483px;top:837px" width="8" height="5"><path d="M0 0.5 L4 4.5 L8 0.5 Z" fill="#444"/></svg>
</div><div class="a" style="left:511px;top:75px;width:197px;height:20px;border-radius:3px 3px 0 0;background:linear-gradient(#fffcf4,#fef5dc 55%,#ffe8a6 55%,#ffe8a6)"></div>
<div class="t" style="left:515px;top:79px;color:#000;font-size:12px;">Браузер перекрестных ссылок</div>
<svg style="left:693px;top:82px" width="10" height="9"><path d="M0.5 0.5 L9.5 8.5 M9.5 0.5 L0.5 8.5" stroke="#6a5e44" stroke-width="1.6"/></svg>
<svg style="left:901px;top:84px" width="10" height="6"><path d="M0 0 L10 0 L5 5 Z" fill="#c8d0dc"/></svg>
<div class="a" style="left:511px;top:95px;width:405px;height:4px;background:#ffe8a6"></div>
<div class="a" style="left:511px;top:99px;width:405px;height:27px;background:#bcc7d8;border-bottom:1px solid #8e9aae"></div>
<div class="a" style="left:906px;top:99px;width:10px;height:26px;background:#d5dce8"></div>
<svg style="left:907px;top:102px" width="8" height="6"><path d="M1 1 L3 3 L1 5Z M5 1 L7 3 L5 5Z" fill="#333"/></svg>
<div class="t" style="left:518px;top:106px;color:#1e1e1e;font-size:12px;">Найти</div>
<div class="a" style="left:557px;top:102px;width:221px;height:20px;background:#fff;border:1px solid #9ba5b6;border-radius:2px"></div>
<svg style="left:769px;top:110px" width="7" height="4"><path d="M0 0 L7 0 L3.5 4 Z" fill="#111"/></svg>
<svg style="left:784px;top:104px" width="17" height="17" shape-rendering="crispEdges"><rect x="0" y="0" width="12" height="11" fill="#f4f6fa"/><rect x="0" y="0" width="12" height="2" fill="#5f8de8"/><rect x="11" y="2" width="1" height="9" fill="#3a4a66"/><rect x="0" y="11" width="12" height="1" fill="#3a4a66"/><path d="M2 4.5h2M5 4.5h3M2 6.5h2M5 6.5h3M2 8.5h2" stroke="#a0aac0"/><rect x="6" y="6" width="3" height="4" fill="#1e3a8c"/><rect x="10" y="6" width="3" height="4" fill="#1e3a8c"/><rect x="5" y="9" width="4" height="4" fill="#1e3a8c"/><rect x="10" y="9" width="4" height="4" fill="#1e3a8c"/><rect x="4" y="12" width="5" height="4" fill="#1e3a8c"/><rect x="10" y="12" width="6" height="4" fill="#1e3a8c"/><rect x="7" y="7" width="1" height="2" fill="#fff"/><rect x="11" y="7" width="1" height="2" fill="#fff"/><rect x="6" y="10" width="2" height="2" fill="#fff"/><rect x="11" y="10" width="2" height="2" fill="#fff"/><rect x="5" y="13" width="3" height="2" fill="#fff"/><rect x="11" y="13" width="3" height="2" fill="#fff"/></svg>
<div class="a" style="left:511px;top:126px;width:405px;height:825px;background:#fff"></div>
<div class="a" style="left:511px;top:126px;width:2px;height:825px;background:#e9ecf0"></div>
<div class="a" style="left:793px;top:126px;width:1px;height:824px;background:#8a919c"></div>
<div class="a" style="left:511px;top:949px;width:283px;height:1px;background:#b8bec8"></div>
<div class="a" style="left:798px;top:126px;width:118px;height:813px;border-left:1px solid #828a98;border-bottom:1px solid #828a98;background:#fff"></div>
<div class="a" style="left:915px;top:126px;width:1px;height:825px;background:#9a9a9a"></div>
<div class="a" style="left:513px;top:136px;width:263px;height:13px;background:linear-gradient(#f6f7f9,#f1f2f5)"></div>
<div class="a" style="left:513px;top:149px;width:263px;height:1px;background:#d5d5d5"></div>
<div class="a" style="left:690px;top:127px;width:1px;height:22px;background:#e6e8ec"></div>
<div class="a" style="left:762px;top:127px;width:1px;height:22px;background:#e6e8ec"></div>
<div class="a" style="left:513px;top:126px;width:263px;height:823px;overflow:hidden">
<div class="t" style="left:6px;top:6px;color:#000;font-size:12px;">Имя</div>
<div class="t" style="left:184px;top:6px;color:#000;font-size:12px;">Видимость</div>
<div class="t" style="left:256px;top:6px;color:#000;font-size:12px;">Адрес</div>
<div class="t" style="left:6px;top:28px;color:#0000ff;font-size:12px;transform:scaleX(0.91);transform-origin:0 0">FKO</div>
<div class="t" style="left:184px;top:28px;color:#0000ff;font-size:12px;">Prog1</div>
<div class="t" style="left:256px;top:28px;color:#0000ff;font-size:12px;">FKO</div>
<div class="t" style="left:6px;top:47px;color:#0000ff;font-size:12px;transform:scaleX(0.91);transform-origin:0 0">XRK62</div>
<div class="t" style="left:184px;top:47px;color:#0000ff;font-size:12px;">Prog1</div>
<div class="t" style="left:256px;top:47px;color:#0000ff;font-size:12px;">XRK62</div>
<div class="t" style="left:6px;top:66px;color:#0000ff;font-size:12px;transform:scaleX(0.91);transform-origin:0 0">SSTT1</div>
<div class="t" style="left:184px;top:66px;color:#0000ff;font-size:12px;">Prog1</div>
<div class="t" style="left:256px;top:66px;color:#0000ff;font-size:12px;">SSTT1</div>
<div class="t" style="left:6px;top:85px;color:#0000ff;font-size:12px;transform:scaleX(0.91);transform-origin:0 0">ZBLSTT</div>
<div class="t" style="left:184px;top:85px;color:#0000ff;font-size:12px;">Prog1</div>
<div class="t" style="left:256px;top:85px;color:#0000ff;font-size:12px;">ZBLSTT</div>
<div class="t" style="left:6px;top:104px;color:#0000ff;font-size:12px;transform:scaleX(0.91);transform-origin:0 0">SSPY</div>
<div class="t" style="left:184px;top:104px;color:#0000ff;font-size:12px;">Prog1</div>
<div class="t" style="left:256px;top:104px;color:#0000ff;font-size:12px;">SSPY</div>
<div class="t" style="left:6px;top:123px;color:#0000ff;font-size:12px;transform:scaleX(0.91);transform-origin:0 0">ZBLSPY</div>
<div class="t" style="left:184px;top:123px;color:#0000ff;font-size:12px;">Prog1</div>
<div class="t" style="left:256px;top:123px;color:#0000ff;font-size:12px;">ZBLSPY</div>
<div class="t" style="left:6px;top:142px;color:#0000ff;font-size:12px;transform:scaleX(0.91);transform-origin:0 0">XOCPM</div>
<div class="t" style="left:184px;top:142px;color:#0000ff;font-size:12px;">Prog1</div>
<div class="t" style="left:256px;top:142px;color:#0000ff;font-size:12px;">XOCPM</div>
<div class="t" style="left:6px;top:161px;color:#0000ff;font-size:12px;transform:scaleX(0.91);transform-origin:0 0">ZVWT</div>
<div class="t" style="left:184px;top:161px;color:#0000ff;font-size:12px;">Prog1</div>
<div class="t" style="left:256px;top:161px;color:#0000ff;font-size:12px;">ZVWT</div>
<div class="t" style="left:6px;top:180px;color:#0000ff;font-size:12px;transform:scaleX(0.91);transform-origin:0 0">ZCPM2</div>
<div class="t" style="left:184px;top:180px;color:#0000ff;font-size:12px;">Prog1</div>
<div class="t" style="left:256px;top:180px;color:#0000ff;font-size:12px;">ZCPM2</div>
<div class="t" style="left:6px;top:199px;color:#0000ff;font-size:12px;transform:scaleX(0.91);transform-origin:0 0">ZVIP1M</div>
<div class="t" style="left:184px;top:199px;color:#0000ff;font-size:12px;">Prog1</div>
<div class="t" style="left:256px;top:199px;color:#0000ff;font-size:12px;">ZVIP1M</div>
<div class="t" style="left:6px;top:218px;color:#0000ff;font-size:12px;transform:scaleX(0.91);transform-origin:0 0">XRKA0</div>
<div class="t" style="left:184px;top:218px;color:#0000ff;font-size:12px;">Prog1</div>
<div class="t" style="left:256px;top:218px;color:#0000ff;font-size:12px;">XRKA0</div>
<div class="t" style="left:6px;top:237px;color:#0000ff;font-size:12px;transform:scaleX(0.91);transform-origin:0 0">XRKA1</div>
<div class="t" style="left:184px;top:237px;color:#0000ff;font-size:12px;">Prog1</div>
<div class="t" style="left:256px;top:237px;color:#0000ff;font-size:12px;">XRKA1</div>
<div class="t" style="left:6px;top:256px;color:#0000ff;font-size:12px;transform:scaleX(0.91);transform-origin:0 0">XSK1</div>
<div class="t" style="left:184px;top:256px;color:#0000ff;font-size:12px;">Prog1</div>
<div class="t" style="left:256px;top:256px;color:#0000ff;font-size:12px;">XSK1</div>
<div class="t" style="left:6px;top:275px;color:#0000ff;font-size:12px;transform:scaleX(0.91);transform-origin:0 0">ZZPVIP</div>
<div class="t" style="left:184px;top:275px;color:#0000ff;font-size:12px;">Prog1</div>
<div class="t" style="left:256px;top:275px;color:#0000ff;font-size:12px;">ZZPVIP</div>
<div class="t" style="left:6px;top:294px;color:#0000ff;font-size:12px;transform:scaleX(0.91);transform-origin:0 0">ZVIP2M</div>
<div class="t" style="left:184px;top:294px;color:#0000ff;font-size:12px;">Prog1</div>
<div class="t" style="left:256px;top:294px;color:#0000ff;font-size:12px;">ZVIP2M</div>
<div class="t" style="left:6px;top:313px;color:#0000ff;font-size:12px;transform:scaleX(0.91);transform-origin:0 0">XRK40</div>
<div class="t" style="left:184px;top:313px;color:#0000ff;font-size:12px;">Prog1</div>
<div class="t" style="left:256px;top:313px;color:#0000ff;font-size:12px;">XRK40</div>
<div class="t" style="left:6px;top:332px;color:#0000ff;font-size:12px;transform:scaleX(0.91);transform-origin:0 0">XRK60</div>
<div class="t" style="left:184px;top:332px;color:#0000ff;font-size:12px;">Prog1</div>
<div class="t" style="left:256px;top:332px;color:#0000ff;font-size:12px;">XRK60</div>
<div class="t" style="left:6px;top:351px;color:#0000ff;font-size:12px;transform:scaleX(0.91);transform-origin:0 0">ZZPYY</div>
<div class="t" style="left:184px;top:351px;color:#0000ff;font-size:12px;">Prog1</div>
<div class="t" style="left:256px;top:351px;color:#0000ff;font-size:12px;">ZZPYY</div>
<div class="t" style="left:6px;top:370px;color:#0000ff;font-size:12px;transform:scaleX(0.91);transform-origin:0 0">XRK41</div>
<div class="t" style="left:184px;top:370px;color:#0000ff;font-size:12px;">Prog1</div>
<div class="t" style="left:256px;top:370px;color:#0000ff;font-size:12px;">XRK41</div>
<div class="t" style="left:6px;top:389px;color:#0000ff;font-size:12px;transform:scaleX(0.91);transform-origin:0 0">XRK63</div>
<div class="t" style="left:184px;top:389px;color:#0000ff;font-size:12px;">Prog1</div>
<div class="t" style="left:256px;top:389px;color:#0000ff;font-size:12px;">XRK63</div>
<div class="t" style="left:6px;top:408px;color:#0000ff;font-size:12px;transform:scaleX(0.91);transform-origin:0 0">ZSK1</div>
<div class="t" style="left:184px;top:408px;color:#0000ff;font-size:12px;">Prog1</div>
<div class="t" style="left:256px;top:408px;color:#0000ff;font-size:12px;">ZSK1</div>
<div class="t" style="left:6px;top:427px;color:#0000ff;font-size:12px;transform:scaleX(0.91);transform-origin:0 0">X5KY12</div>
<div class="t" style="left:184px;top:427px;color:#0000ff;font-size:12px;">Prog1</div>
<div class="t" style="left:256px;top:427px;color:#0000ff;font-size:12px;">X5KY12</div>
<div class="t" style="left:6px;top:446px;color:#0000ff;font-size:12px;transform:scaleX(0.91);transform-origin:0 0">ZSK2</div>
<div class="t" style="left:184px;top:446px;color:#0000ff;font-size:12px;">Prog1</div>
<div class="t" style="left:256px;top:446px;color:#0000ff;font-size:12px;">ZSK2</div>
<div class="t" style="left:6px;top:465px;color:#0000ff;font-size:12px;transform:scaleX(0.91);transform-origin:0 0">XSK2</div>
<div class="t" style="left:184px;top:465px;color:#0000ff;font-size:12px;">Prog1</div>
<div class="t" style="left:256px;top:465px;color:#0000ff;font-size:12px;">XSK2</div>
<div class="t" style="left:6px;top:484px;color:#0000ff;font-size:12px;transform:scaleX(0.91);transform-origin:0 0">ZBLNTC</div>
<div class="t" style="left:184px;top:484px;color:#0000ff;font-size:12px;">Prog1</div>
<div class="t" style="left:256px;top:484px;color:#0000ff;font-size:12px;">ZBLNTC</div>
<div class="t" style="left:6px;top:503px;color:#0000ff;font-size:12px;transform:scaleX(0.91);transform-origin:0 0">X5KY11</div>
<div class="t" style="left:184px;top:503px;color:#0000ff;font-size:12px;">Prog1</div>
<div class="t" style="left:256px;top:503px;color:#0000ff;font-size:12px;">X5KY11</div>
<div class="t" style="left:6px;top:522px;color:#0000ff;font-size:12px;transform:scaleX(0.91);transform-origin:0 0">X5KY10</div>
<div class="t" style="left:184px;top:522px;color:#0000ff;font-size:12px;">Prog1</div>
<div class="t" style="left:256px;top:522px;color:#0000ff;font-size:12px;">X5KY10</div>
<div class="t" style="left:6px;top:541px;color:#0000ff;font-size:12px;transform:scaleX(0.91);transform-origin:0 0">ZMYY1</div>
<div class="t" style="left:184px;top:541px;color:#0000ff;font-size:12px;">Prog1</div>
<div class="t" style="left:256px;top:541px;color:#0000ff;font-size:12px;">ZMYY1</div>
<div class="t" style="left:6px;top:560px;color:#0000ff;font-size:12px;transform:scaleX(0.91);transform-origin:0 0">XRK44</div>
<div class="t" style="left:184px;top:560px;color:#0000ff;font-size:12px;">Prog1</div>
<div class="t" style="left:256px;top:560px;color:#0000ff;font-size:12px;">XRK44</div>
<div class="t" style="left:6px;top:579px;color:#0000ff;font-size:12px;transform:scaleX(0.91);transform-origin:0 0">XRK45</div>
<div class="t" style="left:184px;top:579px;color:#0000ff;font-size:12px;">Prog1</div>
<div class="t" style="left:256px;top:579px;color:#0000ff;font-size:12px;">XRK45</div>
<div class="t" style="left:6px;top:598px;color:#0000ff;font-size:12px;transform:scaleX(0.91);transform-origin:0 0">ZMYY2</div>
<div class="t" style="left:184px;top:598px;color:#0000ff;font-size:12px;">Prog1</div>
<div class="t" style="left:256px;top:598px;color:#0000ff;font-size:12px;">ZMYY2</div>
<div class="t" style="left:6px;top:617px;color:#0000ff;font-size:12px;transform:scaleX(0.91);transform-origin:0 0">ZMKO1</div>
<div class="t" style="left:184px;top:617px;color:#0000ff;font-size:12px;">Prog1</div>
<div class="t" style="left:256px;top:617px;color:#0000ff;font-size:12px;">ZMKO1</div>
<div class="t" style="left:6px;top:636px;color:#0000ff;font-size:12px;transform:scaleX(0.91);transform-origin:0 0">XRK70</div>
<div class="t" style="left:184px;top:636px;color:#0000ff;font-size:12px;">Prog1</div>
<div class="t" style="left:256px;top:636px;color:#0000ff;font-size:12px;">XRK70</div>
<div class="t" style="left:6px;top:655px;color:#0000ff;font-size:12px;transform:scaleX(0.91);transform-origin:0 0">XRK72</div>
<div class="t" style="left:184px;top:655px;color:#0000ff;font-size:12px;">Prog1</div>
<div class="t" style="left:256px;top:655px;color:#0000ff;font-size:12px;">XRK72</div>
<div class="t" style="left:6px;top:674px;color:#0000ff;font-size:12px;transform:scaleX(0.91);transform-origin:0 0">X5KY06</div>
<div class="t" style="left:184px;top:674px;color:#0000ff;font-size:12px;">Prog1</div>
<div class="t" style="left:256px;top:674px;color:#0000ff;font-size:12px;">X5KY06</div>
<div class="t" style="left:6px;top:693px;color:#0000ff;font-size:12px;transform:scaleX(0.91);transform-origin:0 0">ZMKO2</div>
<div class="t" style="left:184px;top:693px;color:#0000ff;font-size:12px;">Prog1</div>
<div class="t" style="left:256px;top:693px;color:#0000ff;font-size:12px;">ZMKO2</div>
<div class="t" style="left:6px;top:712px;color:#0000ff;font-size:12px;transform:scaleX(0.91);transform-origin:0 0">ZMREK1</div>
<div class="t" style="left:184px;top:712px;color:#0000ff;font-size:12px;">Prog1</div>
<div class="t" style="left:256px;top:712px;color:#0000ff;font-size:12px;">ZMREK1</div>
<div class="t" style="left:6px;top:731px;color:#0000ff;font-size:12px;transform:scaleX(0.91);transform-origin:0 0">X5KY08</div>
<div class="t" style="left:184px;top:731px;color:#0000ff;font-size:12px;">Prog1</div>
<div class="t" style="left:256px;top:731px;color:#0000ff;font-size:12px;">X5KY08</div>
<div class="t" style="left:6px;top:750px;color:#0000ff;font-size:12px;transform:scaleX(0.91);transform-origin:0 0">XRK71</div>
<div class="t" style="left:184px;top:750px;color:#0000ff;font-size:12px;">Prog1</div>
<div class="t" style="left:256px;top:750px;color:#0000ff;font-size:12px;">XRK71</div>
<div class="t" style="left:6px;top:769px;color:#0000ff;font-size:12px;transform:scaleX(0.91);transform-origin:0 0">X5KY0A</div>
<div class="t" style="left:184px;top:769px;color:#0000ff;font-size:12px;">Prog1</div>
<div class="t" style="left:256px;top:769px;color:#0000ff;font-size:12px;">X5KY0A</div>
<div class="t" style="left:6px;top:788px;color:#0000ff;font-size:12px;transform:scaleX(0.91);transform-origin:0 0">ZMREK2</div>
<div class="t" style="left:184px;top:788px;color:#0000ff;font-size:12px;">Prog1</div>
<div class="t" style="left:256px;top:788px;color:#0000ff;font-size:12px;">ZMREK2</div>
</div>
<div class="a" style="left:776px;top:127px;width:16px;height:805px;background:linear-gradient(90deg,#e8e8e8,#f0f0f0 40%,#ececec)"></div>
<svg style="left:781px;top:134px" width="8" height="5"><path d="M0 4.5 L4 0.5 L8 4.5 Z" fill="#3a3a3a"/></svg>
<div class="a" style="left:776px;top:151px;width:14px;height:15px;border:1px solid #959595;border-radius:2px;background:linear-gradient(90deg,#f2f2f2,#e6e6e6 50%,#d2d2d2)"></div>
<svg style="left:781px;top:920px" width="8" height="5"><path d="M0 0.5 L4 4.5 L8 0.5 Z" fill="#3a3a3a"/></svg>
<div class="a" style="left:513px;top:932px;width:263px;height:17px;background:linear-gradient(#e8e8e8,#f0f0f0 40%,#ececec)"></div>
<div class="a" style="left:776px;top:932px;width:17px;height:17px;background:#f0f0f0"></div>
<svg style="left:514px;top:936px" width="5" height="8"><path d="M4.5 0 L0.5 4 L4.5 8 Z" fill="#3a3a3a"/></svg>
<svg style="left:765px;top:936px" width="5" height="8"><path d="M0.5 0 L4.5 4 L0.5 8 Z" fill="#3a3a3a"/></svg>
<div class="a" style="left:531px;top:933px;width:61px;height:15px;border:1px solid #959595;border-radius:2px;background:linear-gradient(#f2f2f2,#e2e2e2 50%,#d4d4d4)"></div>
<div class="a" style="left:558px;top:937px;width:7px;height:6px;border-left:1px solid #555;border-right:1px solid #555"></div><div class="a" style="left:561px;top:937px;width:1px;height:6px;background:#555"></div>
<div class="a" style="left:511px;top:951px;width:405px;height:4px;background:#ffe8a6"></div><div class="a hdr" style="left:922px;top:75px;width:352px;height:19px;border-radius:3px 3px 0 0"></div>
<div class="t" style="left:925px;top:78px;color:#fff;font-size:12px;">Обозреватель решений</div>
<svg style="left:1230px;top:82px" width="9" height="5"><path d="M0 0 L8.5 0 L4.25 4.5 Z" fill="#dfe5ee"/></svg><svg style="left:1246px;top:79px" width="8" height="13"><rect x="1.5" y="0.5" width="4" height="6" fill="none" stroke="#e2e7ef" stroke-width="1.2"/><rect x="4" y="0.5" width="1.5" height="6" fill="#e2e7ef"/><rect x="0" y="6.5" width="7" height="1.2" fill="#e2e7ef"/><rect x="3" y="7" width="1.2" height="5" fill="#e2e7ef"/></svg><svg style="left:1260px;top:80px" width="11" height="9"><path d="M0.5 0.5 L10 8.5 M10 0.5 L0.5 8.5" stroke="#e2e7ef" stroke-width="1.5"/></svg>
<div class="a" style="left:922px;top:93px;width:352px;height:27px;background:#bcc7d8"></div>
<svg style="left:929px;top:99px" width="18" height="17"><path d="M0.5 1.5h5l1 1.5h6v10h-12z" fill="#eadcb0" stroke="#a89868"/><rect x="1" y="4" width="11" height="1" fill="#fff3c8"/><rect x="5.5" y="8.5" width="11" height="7" fill="#eef2f8" stroke="#36465e"/><path d="M7 11h1M9 11h6M7 13h1M9 13h6" stroke="#36465e"/></svg>
<div class="a" style="left:951px;top:98px;width:1px;height:18px;background:#8794a8"></div><div class="a" style="left:952px;top:98px;width:1px;height:18px;background:#e6ebf2"></div>
<svg style="left:958px;top:100px" width="17" height="16"><rect x="0.5" y="0.5" width="15" height="14" fill="#f6f8fc" stroke="#3a4a66"/><rect x="1" y="1" width="14" height="2" fill="#5f8de0"/><path d="M4 9 A4 4 0 0 1 11 6" stroke="#3d9a1a" stroke-width="2" fill="none"/><path d="M10 4 L12.5 6.5 L9 7.5Z" fill="#3d9a1a"/><path d="M12 8 A4 4 0 0 1 5 11" stroke="#3d9a1a" stroke-width="2" fill="none"/><path d="M6 13 L3.5 10.5 L7 9.5Z" fill="#3d9a1a"/></svg>
<div class="a" style="left:922px;top:120px;width:352px;height:462px;background:#fff"></div>
<svg style="left:934px;top:121px" width="16" height="16"><rect x="0.5" y="0.5" width="15" height="14" fill="#f4f6fb" stroke="#7a8598"/><rect x="1" y="1" width="14" height="2" fill="#6d93dc"/><path d="M3 11 C3 8 7 8 8 10.5 C9 13 13 13 13 10.5 C13 8 9 8 8 10.5 C7 13 3 13 3 11Z" fill="none" stroke="#5b4fc8" stroke-width="1.8"/></svg>
<div class="t" style="left:955px;top:123px;color:#000;font-size:12px;white-space:pre">Решение &quot;Pattern_LD&quot;  (проектов: 1)</div>
<svg style="left:932px;top:146px" width="7" height="7"><path d="M5.5 0.5 L5.5 5.5 L0.5 5.5 Z" fill="#262626" stroke="#555" stroke-width="0.6"/></svg>
<svg style="left:953px;top:139px" width="16" height="15"><path d="M0.5 2.5h5l1.5 2h8v9h-14.5z" fill="#f7e3a8" stroke="#c9a85a" stroke-dasharray="1 1"/><path d="M1 6h14" stroke="#fff6d6"/></svg>
<div class="t" style="left:974px;top:141px;color:#000;font-size:12px;white-space:pre">Представления решений</div>
<svg style="left:974px;top:157px" width="14" height="16"><path d="M0.5 0.5h8l4 4v11h-12z" fill="#f8f8f8" stroke="#8c8c8c"/><path d="M8.5 0.5v4h4" fill="#e0e0e0" stroke="#8c8c8c"/></svg>
<div class="t" style="left:993px;top:159px;color:#000;font-size:12px;white-space:pre">Deployment.isadpl</div>
<svg style="left:932px;top:182px" width="7" height="7"><path d="M5.5 0.5 L5.5 5.5 L0.5 5.5 Z" fill="#262626" stroke="#555" stroke-width="0.6"/></svg>
<svg style="left:953px;top:175px" width="16" height="15"><rect x="0.5" y="1.5" width="15" height="12.5" fill="#b8c8da" stroke="#6c7c90"/><rect x="1" y="2" width="14" height="3" fill="#dfe8f2"/><rect x="1" y="10" width="14" height="3.5" fill="#9fb2c8"/></svg>
<div class="t" style="left:974px;top:177px;color:#000;font-size:12px;font-weight:bold">Pattern_LD</div>
<svg style="left:950px;top:200px" width="7" height="7"><path d="M5.5 0.5 L5.5 5.5 L0.5 5.5 Z" fill="#262626" stroke="#555" stroke-width="0.6"/></svg>
<svg style="left:972px;top:193px" width="16" height="15" shape-rendering="crispEdges"><rect x="0.5" y="0.5" width="15" height="13" rx="1.5" fill="#eef0f3" stroke="#8a8e94"/><path d="M8.5 2v10M10.5 2v10M12.5 2v10" stroke="#6a6e74"/><rect x="2" y="9" width="1" height="2" fill="#e02020"/><rect x="4" y="9" width="1" height="2" fill="#20a020"/><rect x="6" y="9" width="1" height="2" fill="#2060e0"/></svg>
<div class="t" style="left:993px;top:195px;color:#000;font-size:12px;white-space:pre">Device1</div>
<svg style="left:969px;top:218px" width="7" height="7"><path d="M5.5 0.5 L5.5 5.5 L0.5 5.5 Z" fill="#262626" stroke="#555" stroke-width="0.6"/></svg>
<svg style="left:991px;top:211px" width="16" height="16"><rect x="0.5" y="0.5" width="15" height="15" fill="#e8ecf0" stroke="#6a7a8a"/><path d="M1 15 L15 1 L1 1 Z" fill="#2e5a86"/></svg>
<div class="t" style="left:1012px;top:213px;color:#000;font-size:12px;white-space:pre">Resource1</div>
<svg style="left:988px;top:236px" width="7" height="7"><path d="M5.5 0.5 L5.5 5.5 L0.5 5.5 Z" fill="#262626" stroke="#555" stroke-width="0.6"/></svg>
<svg style="left:1010px;top:229px" width="16" height="16"><rect x="0.5" y="0.5" width="10" height="11" fill="#f6f8fb" stroke="#233a70"/><rect x="4.5" y="3.5" width="11" height="12" fill="#f6f8fb" stroke="#233a70"/><path d="M6 6h1M8 6h6M6 8.5h1M8 8.5h6M6 11h1M8 11h6M6 13.5h1M8 13.5h6" stroke="#233a70"/></svg>
<div class="t" style="left:1031px;top:231px;color:#000;font-size:12px;white-space:pre">Программы</div>
<svg style="left:1007px;top:254px" width="7" height="7"><path d="M5.5 0.5 L5.5 5.5 L0.5 5.5 Z" fill="#262626" stroke="#555" stroke-width="0.6"/></svg>
<div class="a" style="left:1027px;top:247px;width:58px;height:18px;border:1px solid #d4d8de;border-radius:3px;background:linear-gradient(#fbfbfc,#ebedf0)"></div>
<svg style="left:1029px;top:247px" width="16" height="16"><rect x="0.5" y="0.5" width="15" height="15" fill="#fff" stroke="#2a3c78"/><rect x="1" y="1" width="14" height="2" fill="#6d93dc"/><path d="M2 6h4M2 9h4M2 12h4" stroke="#8090b0"/><path d="M8 4.5h5M10.5 4.5v9M8 13.5h5" stroke="#1010d0" stroke-width="1.6"/></svg>
<div class="t" style="left:1050px;top:249px;color:#000;font-size:12px;white-space:pre">Prog1</div>
<svg style="left:1048px;top:265px" width="16" height="17"><path d="M1 3 Q8 0 15 3 V14 Q8 17 1 14Z" fill="#2f6fae" stroke="#1e3e66"/><path d="M5 3v12M10 2.5v12.5" stroke="#bfe0ff" stroke-width="1.2"/><path d="M1 3 Q8 6 15 3" fill="none" stroke="#a8d4f8"/></svg>
<div class="t" style="left:1069px;top:267px;color:#000;font-size:12px;white-space:pre">Локальные переменные</div>
<svg style="left:989px;top:288px" width="7" height="10"><path d="M0.8 0.8 L5.5 4.8 L0.8 8.8 Z" fill="none" stroke="#8a8a8a" stroke-width="1"/></svg>
<svg style="left:1010px;top:283px" width="16" height="15"><path d="M0.5 2.5h5l1.5 1.5h8.5v10h-15z" fill="#e8eef6" stroke="#7a8aa0"/><rect x="3" y="6" width="11" height="6" fill="#3d7ad0"/><path d="M4 8h5M4 10h3" stroke="#fff"/></svg>
<div class="t" style="left:1031px;top:285px;color:#000;font-size:12px;white-space:pre">Lib</div>
<svg style="left:1010px;top:301px" width="16" height="17"><path d="M1 3 Q8 0 15 3 V14 Q8 17 1 14Z" fill="#2f6fae" stroke="#1e3e66"/><path d="M5 3v12M10 2.5v12.5" stroke="#bfe0ff" stroke-width="1.2"/><path d="M1 3 Q8 6 15 3" fill="none" stroke="#a8d4f8"/></svg>
<div class="t" style="left:1031px;top:303px;color:#000;font-size:12px;white-space:pre">Глобальные переменные</div>
<div class="a hdr" style="left:922px;top:588px;width:352px;height:19px;border-radius:3px 3px 0 0"></div>
<div class="t" style="left:925px;top:591px;color:#fff;font-size:12px;">Свойства</div>
<svg style="left:1230px;top:595px" width="9" height="5"><path d="M0 0 L8.5 0 L4.25 4.5 Z" fill="#dfe5ee"/></svg><svg style="left:1246px;top:592px" width="8" height="13"><rect x="1.5" y="0.5" width="4" height="6" fill="none" stroke="#e2e7ef" stroke-width="1.2"/><rect x="4" y="0.5" width="1.5" height="6" fill="#e2e7ef"/><rect x="0" y="6.5" width="7" height="1.2" fill="#e2e7ef"/><rect x="3" y="7" width="1.2" height="5" fill="#e2e7ef"/></svg><svg style="left:1260px;top:593px" width="11" height="9"><path d="M0.5 0.5 L10 8.5 M10 0.5 L0.5 8.5" stroke="#e2e7ef" stroke-width="1.5"/></svg>
<div class="a" style="left:922px;top:606px;width:352px;height:29px;background:#e0e4eb"></div>
<div class="a" style="left:925px;top:609px;width:346px;height:23px;background:#fff;border:1px solid #eef0f4"></div>
<div class="a" style="left:1258px;top:612px;width:12px;height:19px;background:#f0f0f0"></div>
<svg style="left:1262px;top:621px" width="6" height="4"><path d="M0 0 L6 0 L3 3.5 Z" fill="#000"/></svg>
<div class="a" style="left:922px;top:635px;width:352px;height:27px;background:#bcc7d8;border-bottom:1px solid #8d8d8d"></div>
<div class="a" style="left:925px;top:637px;width:23px;height:22px;background:linear-gradient(#fffcf0,#fff3d0);border:1px solid #f0c868;border-radius:1px"></div>
<svg style="left:927px;top:639px" width="18" height="18" shape-rendering="crispEdges"><rect x="1" y="1" width="6" height="6" fill="#fff" stroke="#4a90e0"/><rect x="2" y="3" width="5" height="2" fill="#000"/><rect x="3" y="2" width="2" height="5" fill="#000"/><rect x="1" y="10" width="6" height="6" fill="#fff" stroke="#4a90e0"/><rect x="2" y="12" width="5" height="2" fill="#000"/><rect x="3" y="11" width="2" height="5" fill="#000"/><path d="M9 3.5h3M9 5.5h2M12 5.5h2M9 7.5h2M12 7.5h2M9 9.5h2M12 9.5h2M9 12.5h3M9 14.5h2M12 14.5h2" stroke="#6a7ab0"/><path d="M9 3.5h3M9 12.5h3" stroke="#222"/></svg>
<svg style="left:950px;top:638px" width="18" height="20"><text x="0" y="8.5" font-size="9.5" font-family="Liberation Serif" fill="#2244aa">A</text><text x="0" y="17.5" font-size="9.5" font-family="Liberation Serif" fill="#c02020">Z</text><path d="M12.5 2v14" stroke="#000" stroke-width="1.2"/><path d="M10 13 L12.5 17 L15 13" stroke="#000" stroke-width="1.2" fill="none"/></svg>
<div class="a" style="left:974px;top:638px;width:1px;height:21px;background:#8794a8"></div>
<svg style="left:980px;top:640px" width="17" height="14"><rect x="0.5" y="0.5" width="15" height="12" fill="#d8dce2" stroke="#9aa0a8"/><rect x="1" y="1" width="14" height="2" fill="#b8bec8"/><path d="M3 6h3M8 6h5M3 9h3M8 9h5" stroke="#a8aeb8"/></svg>
<div class="a" style="left:922px;top:662px;width:352px;height:230px;background:#fff;border-left:1px solid #a0a0a0;border-right:1px solid #a0a0a0"></div>
<div class="a" style="left:922px;top:892px;width:352px;height:64px;background:#dee1ea;border:1px solid #9b9b9b"></div>
<div class="a" style="left:923px;top:896px;width:350px;height:1px;background:#9b9b9b"></div>
<div class="a" style="left:923px;top:893px;width:350px;height:3px;background:#e6e9f0"></div>
<div class="a" style="left:0;top:985px;width:1280px;height:39px;background:linear-gradient(90deg,#4596d2 0px,#3f90cf 300px,#3385c8 500px,#2a79c0 700px,#2a74ba 900px,#2566aa 1000px,#1f5494 1100px,#1d4b86 1280px)"></div>
<div class="a" style="left:0;top:985px;width:1280px;height:39px;background:linear-gradient(rgba(255,255,255,0.08),rgba(255,255,255,0.02) 50%,rgba(0,0,0,0.03))"></div>
<div class="a" style="left:0;top:984px;width:1280px;height:1px;background:#101a28"></div><div class="a" style="left:0;top:985px;width:1280px;height:1px;background:#7eb0dc"></div>
<div class="a" style="left:1000px;top:985px;width:70px;height:39px;background:linear-gradient(110deg,transparent 20%,rgba(200,230,255,0.55) 40%,rgba(200,230,255,0.15) 55%,transparent 70%)"></div>
<svg style="left:7px;top:985px" width="40" height="39"><defs><radialGradient id="orb" cx="50%" cy="75%" r="65%"><stop offset="0" stop-color="#7fe0ff"/><stop offset="0.45" stop-color="#2f8ad0"/><stop offset="1" stop-color="#103c70"/></radialGradient></defs><circle cx="20" cy="19.5" r="18" fill="url(#orb)" stroke="#0a2a50" stroke-width="1.2"/><path d="M11 12 Q15 10 19 12 L18 18.5 Q14 16.5 10 18.5Z" fill="#f25022"/><path d="M21 12 Q25 14 29 12 L28 18.5 Q24 20.5 20 18.5Z" fill="#7fba00"/><path d="M10 20.5 Q14 18.5 18 20.5 L17 27 Q13 25 9 27Z" fill="#00a4ef"/><path d="M20 20.5 Q24 22.5 28 20.5 L27 27 Q23 29 19 27Z" fill="#ffb900"/><ellipse cx="20" cy="11" rx="13" ry="8" fill="rgba(255,255,255,0.22)"/><circle cx="20" cy="19.5" r="17" fill="none" stroke="rgba(180,220,255,0.5)" stroke-width="1"/></svg>
<svg style="left:73px;top:990px" width="33" height="30"><path d="M1 4h9l2 3h19v21h-30z" fill="#f3d67a" stroke="#c8a040"/><rect x="3" y="1" width="26" height="12" fill="#fff" stroke="#ddd"/><rect x="6" y="3" width="3" height="2" fill="#3a3"/><rect x="12" y="3" width="3" height="2" fill="#d33"/><rect x="20" y="5" width="3" height="2" fill="#39d"/><path d="M1 11h30v17h-30z" fill="#f6dc8c" stroke="#c8a040"/><path d="M8 27v-9h15v9" fill="none" stroke="#7ab8e0" stroke-width="2.5"/><path d="M6 18h19" stroke="#bfe6ff" stroke-width="2"/></svg>
<svg style="left:137px;top:992px" width="28" height="28"><rect x="3" y="1" width="22" height="25" fill="#cfe0f0" stroke="#8aa8c8"/><rect x="23" y="2" width="3" height="24" fill="#e8f0f8"/><circle cx="13" cy="13" r="8.5" fill="#f07a1a" stroke="#c04a00"/><path d="M10 8 L18 13 L10 18Z" fill="#fff"/></svg>
<svg style="left:197px;top:988px" width="33" height="31"><circle cx="17" cy="16" r="10.5" fill="#1f6fc8"/><circle cx="17" cy="16" r="6" fill="#fff"/><rect x="10" y="15" width="14" height="3" fill="#1f6fc8"/><rect x="17" y="18" width="10" height="3" fill="#fff"/><path d="M11 9 A8 8 0 0 1 25 11" fill="none" stroke="#6fb8f8" stroke-width="2"/><path d="M28 8 C33 -2 12 2 4 20 C0 31 9 30 15 26" fill="none" stroke="#e8b828" stroke-width="2.6"/></svg>
<svg style="left:260px;top:990px" width="31" height="30"><path d="M15.5 15 L2.94 7.75 A14.5 14.5 0 0 1 28.06 7.75 Z" fill="#db4437"/><path d="M15.5 15 L28.06 7.75 A14.5 14.5 0 0 1 15.5 29.5 Z" fill="#f4c20d"/><path d="M15.5 15 L15.5 29.5 A14.5 14.5 0 0 1 2.94 7.75 Z" fill="#0f9d58"/><circle cx="15.5" cy="15" r="7" fill="#fff"/><circle cx="15.5" cy="15" r="5.3" fill="#4285f4"/></svg>
<svg style="left:321px;top:989px" width="32" height="31"><path d="M9 3 L30 7 L26 29 L3 24Z" fill="#eaf6fa" stroke="#7aa8c0"/><path d="M9 3 L14 4 L8 26 L3 24Z" fill="#8fd0e8"/><path d="M11 2 L28 6" stroke="#999" stroke-width="2" stroke-dasharray="1.5 1.5"/><path d="M14 11 L26 13 M13 15 L25 17 M12 19 L24 21" stroke="#b8d8e8"/></svg>
<div class="a" style="left:369px;top:985px;width:59px;height:39px;border:1px solid rgba(10,30,60,0.75);border-radius:3px;background:linear-gradient(rgba(255,255,255,0.30),rgba(255,255,255,0.12) 50%,rgba(255,255,255,0.06));box-shadow:inset 0 0 0 1px rgba(255,255,255,0.35)"></div>
<div class="a" style="left:432px;top:985px;width:58px;height:39px;border:1px solid rgba(10,30,60,0.75);border-radius:3px;background:linear-gradient(rgba(255,255,255,0.30),rgba(255,255,255,0.12) 50%,rgba(255,255,255,0.06));box-shadow:inset 0 0 0 1px rgba(255,255,255,0.35)"></div>
<div class="a" style="left:494px;top:985px;width:50px;height:39px;border:1px solid rgba(10,30,60,0.75);border-radius:3px;background:linear-gradient(rgba(255,255,255,0.30),rgba(255,255,255,0.12) 50%,rgba(255,255,255,0.06));box-shadow:inset 0 0 0 1px rgba(255,255,255,0.35)"></div>
<div class="a" style="left:556px;top:985px;width:58px;height:39px;border:1px solid rgba(10,30,60,0.75);border-radius:3px;background:linear-gradient(rgba(255,255,255,0.30),rgba(255,255,255,0.12) 50%,rgba(255,255,255,0.06));box-shadow:inset 0 0 0 1px rgba(255,255,255,0.35)"></div>
<div class="a" style="left:618px;top:985px;width:58px;height:38px;border:1px solid #0e2a4a;border-radius:3px;background:linear-gradient(#cfe4f4,#a4c8e6 40%,#86b6de 60%,#9cc4e6);box-shadow:inset 0 0 0 1px rgba(255,255,255,0.8)"></div>
<div class="a" style="left:544px;top:987px;width:2px;height:36px;background:rgba(200,225,250,0.5)"></div><div class="a" style="left:547px;top:988px;width:2px;height:35px;background:rgba(200,225,250,0.4)"></div>
<svg style="left:383px;top:990px" width="31" height="30"><rect x="1" y="1" width="29" height="28" rx="2" fill="#3a3fc8" stroke="#1a1e80"/><rect x="8" y="2" width="15" height="9" fill="#e8ecf4"/><rect x="17" y="3" width="4" height="6" fill="#3a3fc8"/><rect x="4" y="14" width="23" height="14" fill="#fff"/><path d="M6 17h19M6 20.5h19M6 24h19" stroke="#e03030" stroke-width="1.6"/></svg>
<svg style="left:445px;top:989px" width="33" height="32"><circle cx="16" cy="16" r="15" fill="#8a8478" stroke="#5a554c"/><circle cx="16" cy="16" r="11" fill="#c86a2a" stroke="#e8c090" stroke-width="2"/><path d="M11 8 h4 a8 8 0 0 1 0 16 h-4z" fill="none" stroke="#f4e4c8" stroke-width="2.4"/><rect x="18" y="18" width="13" height="13" fill="#3a6a3a"/><rect x="19" y="19" width="5" height="5" fill="#e84"/><rect x="25" y="19" width="5" height="5" fill="#4ae"/><rect x="19" y="25" width="5" height="5" fill="#ec4"/><rect x="25" y="25" width="5" height="5" fill="#4c4"/></svg>
<svg style="left:504px;top:990px" width="32" height="30"><path d="M12 2h15l4 4v22h-19z" fill="#fff" stroke="#8aa"/><path d="M2 6 L20 3 L20 27 L2 24Z" fill="#1d5fb8"/><text x="3" y="21" font-size="15" font-weight="bold" font-family="Liberation Sans" fill="#fff">W</text><path d="M18 20 L31 24 L24 29Z" fill="#cfe0f4"/></svg>
<svg style="left:570px;top:991px" width="30" height="28"><rect x="1" y="0.5" width="28" height="27" fill="#c01818" stroke="#801010"/><path d="M6 22 C10 18 13 10 14 5 C15 2 17 5 15 10 C13 16 18 20 24 19 C27 19 26 22 22 21 C17 20 10 22 6 24Z" fill="none" stroke="#fff" stroke-width="1.5"/></svg>
<svg style="left:631px;top:988px" width="32" height="32"><defs><linearGradient id="apg" x1="0" y1="0" x2="0" y2="1"><stop offset="0" stop-color="#7f9fc2"/><stop offset="0.45" stop-color="#4f74a0"/><stop offset="0.5" stop-color="#2f5783"/><stop offset="1" stop-color="#2c5280"/></linearGradient></defs><rect x="0.5" y="0.5" width="31" height="31" rx="3" fill="url(#apg)" stroke="#22466e"/><path d="M3 4h11v5h-2v2h2v6h-11v-6h2v-2h-2z" fill="#f6f6f6"/><path d="M18 13h11v5h-2v2h2v7h-11v-7h2v-2h-2z" fill="#f0f0f0"/><path d="M14 6h3v9h1" fill="none" stroke="#f0f0f0" stroke-width="1"/></svg>
<div class="t" style="left:1066px;top:993px;color:#fff;font-size:11.5px">EN</div>
<svg style="left:1097px;top:999px" width="8" height="5"><path d="M0 4.5 L4 0.5 L8 4.5Z" fill="#fff"/></svg>
<svg style="left:1118px;top:991px" width="17" height="17"><path d="M2 1v15" stroke="#fff" stroke-width="1.6"/><path d="M3 2h9l-2 3h4v6h-11z" fill="#fff"/><circle cx="12" cy="12" r="4.5" fill="#e02020" stroke="#fff"/><path d="M10 10l4 4M14 10l-4 4" stroke="#fff" stroke-width="1.4"/></svg>
<svg style="left:1143px;top:991px" width="17" height="17"><rect x="1" y="1" width="5" height="6" fill="none" stroke="#fff" stroke-width="1.4"/><path d="M3.5 7v9" stroke="#fff" stroke-width="1.4"/><rect x="6.5" y="5.5" width="9" height="7" fill="#1e5a9a" stroke="#fff" stroke-width="1.4"/><path d="M8 15h6M11 13v2" stroke="#fff" stroke-width="1.4"/></svg>
<svg style="left:1168px;top:993px" width="13" height="14"><path d="M0.5 4.5h3l4-4v13l-4-4h-3z" fill="#fff"/><path d="M10 4 Q12 7 10 10" fill="none" stroke="#fff" stroke-width="1.2"/></svg>
<div class="t" style="left:1213px;top:990px;color:#fff;font-size:12px;transform:scaleX(0.93);transform-origin:0 0">15:41</div>
<div class="t" style="left:1199px;top:1008px;color:#fff;font-size:12px;transform:scaleX(0.92);transform-origin:0 0">19.11.2013</div>
<div class="a" style="left:1266px;top:986px;width:14px;height:38px;border-left:1px solid rgba(10,30,60,0.8);background:linear-gradient(90deg,rgba(255,255,255,0.25),rgba(255,255,255,0.1))"></div>
</body></html>
